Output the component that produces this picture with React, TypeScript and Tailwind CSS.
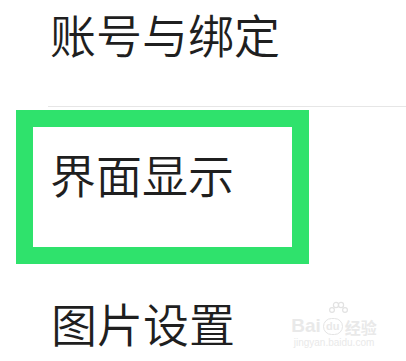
export default function App() {
  const font = { fontFamily: '"Noto Sans CJK SC", "Noto Sans", sans-serif' };
  const latin = { fontFamily: '"Liberation Sans", sans-serif' };
  return (
    <div className="relative w-[406px] h-[361px] bg-white overflow-hidden text-[#1f1f1f] font-[350]" style={font}>
      <div className="h-[106px] pl-[50px] pt-[5px] text-[46px] leading-[56px]">账号与绑定</div>
      <div className="ml-[48px] h-px bg-[#e6e6e6]" />
      <div className="mt-[3px] ml-[16px] w-[293px] h-[154px] border-[17px] border-[#2fe26c] bg-white pl-[17px] pt-[18px] text-[46px] leading-[56px]">
        界面显示
      </div>
      <div className="pl-[51px] pt-[30px] text-[46px] leading-[56px]">图片设置</div>

      {/* baidu jingyan watermark */}
      <div className="absolute left-[289px] top-[301px] flex w-[90px] flex-col items-center text-[#e9e9e9] select-none">
        <svg width="20" height="15" viewBox="0 0 20 15" className="ml-[8px]" fill="none" stroke="#e2e2e2" strokeWidth="1.2">
          <circle cx="4" cy="9" r="2.4" />
          <circle cx="8" cy="4" r="2.6" />
          <circle cx="13" cy="4" r="2.6" />
          <circle cx="17" cy="9" r="2.4" />
        </svg>
        <div className="flex items-end gap-[2px] leading-none">
          <span className="text-[19px] font-bold" style={latin}>Bai</span>
          <span className="flex h-[17px] w-[20px] items-center justify-center rounded-full border-[1.5px] border-[#e4e4e4] text-[11px] font-bold" style={latin}>
            du
          </span>
          <span className="text-[16px] font-bold">经验</span>
        </div>
        <div className="mt-[3px] text-[10px] leading-none" style={latin}>
          jingyan.baidu.com
        </div>
      </div>
    </div>
  );
}
